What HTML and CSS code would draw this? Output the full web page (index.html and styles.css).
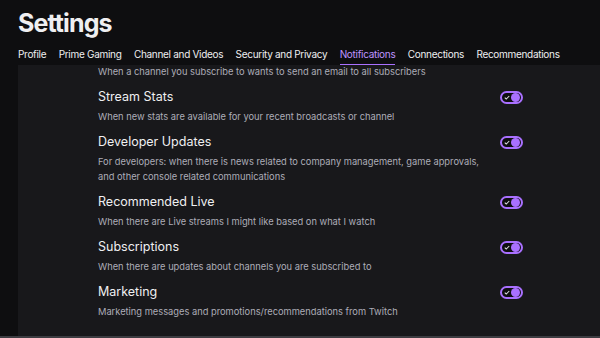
FILE: index.html
```html
<!DOCTYPE html>
<html lang="en">
<head>
  <meta charset="UTF-8">
  <meta name="viewport" content="width=device-width, initial-scale=1.0">
  <title>Settings</title>
  <link rel="stylesheet" href="styles.css">
</head>
<body>
  <div class="page">
    <h1 class="page-title">Settings</h1>
    <nav class="tabs">
      <a href="#" class="tab">Profile</a>
      <a href="#" class="tab">Prime Gaming</a>
      <a href="#" class="tab">Channel and Videos</a>
      <a href="#" class="tab">Security and Privacy</a>
      <a href="#" class="tab active">Notifications</a>
      <a href="#" class="tab">Connections</a>
      <a href="#" class="tab">Recommendations</a>
    </nav>

    <section class="panel">
      <p class="desc desc-top">When a channel you subscribe to wants to send an email to all subscribers</p>

      <div class="setting">
        <div class="setting-text">
          <div class="setting-title">Stream Stats</div>
          <p class="desc">When new stats are available for your recent broadcasts or channel</p>
        </div>
        <span class="toggle"><svg class="check" viewBox="0 0 8 6"><path d="M1 3.2 L3 5 L7 1"/></svg><span class="knob"></span></span>
      </div>

      <div class="setting">
        <div class="setting-text">
          <div class="setting-title">Developer Updates</div>
          <p class="desc">For developers: when there is news related to company management, game approvals, and other console related communications</p>
        </div>
        <span class="toggle"><svg class="check" viewBox="0 0 8 6"><path d="M1 3.2 L3 5 L7 1"/></svg><span class="knob"></span></span>
      </div>

      <div class="setting">
        <div class="setting-text">
          <div class="setting-title">Recommended Live</div>
          <p class="desc">When there are Live streams I might like based on what I watch</p>
        </div>
        <span class="toggle"><svg class="check" viewBox="0 0 8 6"><path d="M1 3.2 L3 5 L7 1"/></svg><span class="knob"></span></span>
      </div>

      <div class="setting">
        <div class="setting-text">
          <div class="setting-title">Subscriptions</div>
          <p class="desc">When there are updates about channels you are subscribed to</p>
        </div>
        <span class="toggle"><svg class="check" viewBox="0 0 8 6"><path d="M1 3.2 L3 5 L7 1"/></svg><span class="knob"></span></span>
      </div>

      <div class="setting">
        <div class="setting-text">
          <div class="setting-title">Marketing</div>
          <p class="desc">Marketing messages and promotions/recommendations from Twitch</p>
        </div>
        <span class="toggle"><svg class="check" viewBox="0 0 8 6"><path d="M1 3.2 L3 5 L7 1"/></svg><span class="knob"></span></span>
      </div>
    </section>
  </div>
  <div class="scrollbar"></div>
</body>
</html>
```

FILE: styles.css
```css
html, body {
  margin: 0;
  padding: 0;
  height: 100%;
}

body {
  font-family: 'Inter', 'Noto Sans', sans-serif;
  background-color: #0e0e10;
  color: #efeff1;
  overflow: hidden;
  display: flex;
  flex-direction: column;
}

.page {
  flex: 1;
  display: flex;
  flex-direction: column;
  min-height: 0;
}

.page-title {
  margin: 0;
  padding: 8px 0 0 18px;
  font-size: 25px;
  font-weight: 700;
  line-height: 31px;
  letter-spacing: -0.9px;
}

.tabs {
  display: flex;
  gap: 12.4px;
  padding: 8px 0 0 18px;
  white-space: nowrap;
}

.tab {
  color: #efeff1;
  text-decoration: none;
  font-size: 10px;
  letter-spacing: -0.3px;
  line-height: 15px;
  padding-bottom: 2px;
  border-bottom: 1px solid transparent;
}

.tab.active {
  color: #bf94ff;
  border-bottom-color: #a970ff;
}

.panel {
  flex: 1;
  margin-left: 18px;
  padding: 0 77px 0 80px;
  background-color: #18181b;
  overflow: hidden;
}

.desc {
  margin: 3px 0 0;
  font-size: 9.3px;
  line-height: 15px;
  color: #adadb8;
}

.desc-top {
  margin: -1px 0 0;
  padding-bottom: 4px;
}

.setting {
  display: flex;
  align-items: flex-start;
  gap: 12px;
  padding: 5px 0 4px;
}

.setting-text {
  flex: 1;
}

.setting-title {
  font-size: 12.5px;
  line-height: 18px;
}

.toggle {
  position: relative;
  flex: none;
  width: 19px;
  height: 9px;
  margin-top: 3px;
  border: 2px solid #a970ff;
  border-radius: 8px;
  background-color: #0e0e10;
}

.check {
  position: absolute;
  left: 2px;
  top: 2px;
  width: 6px;
  height: 5px;
  fill: none;
  stroke: #dedee3;
  stroke-width: 1.4;
}

.knob {
  position: absolute;
  right: 1px;
  top: 0;
  width: 9px;
  height: 9px;
  border-radius: 50%;
  background-color: #a970ff;
}

.scrollbar {
  height: 2px;
  background-color: #3d3d42;
}
```
